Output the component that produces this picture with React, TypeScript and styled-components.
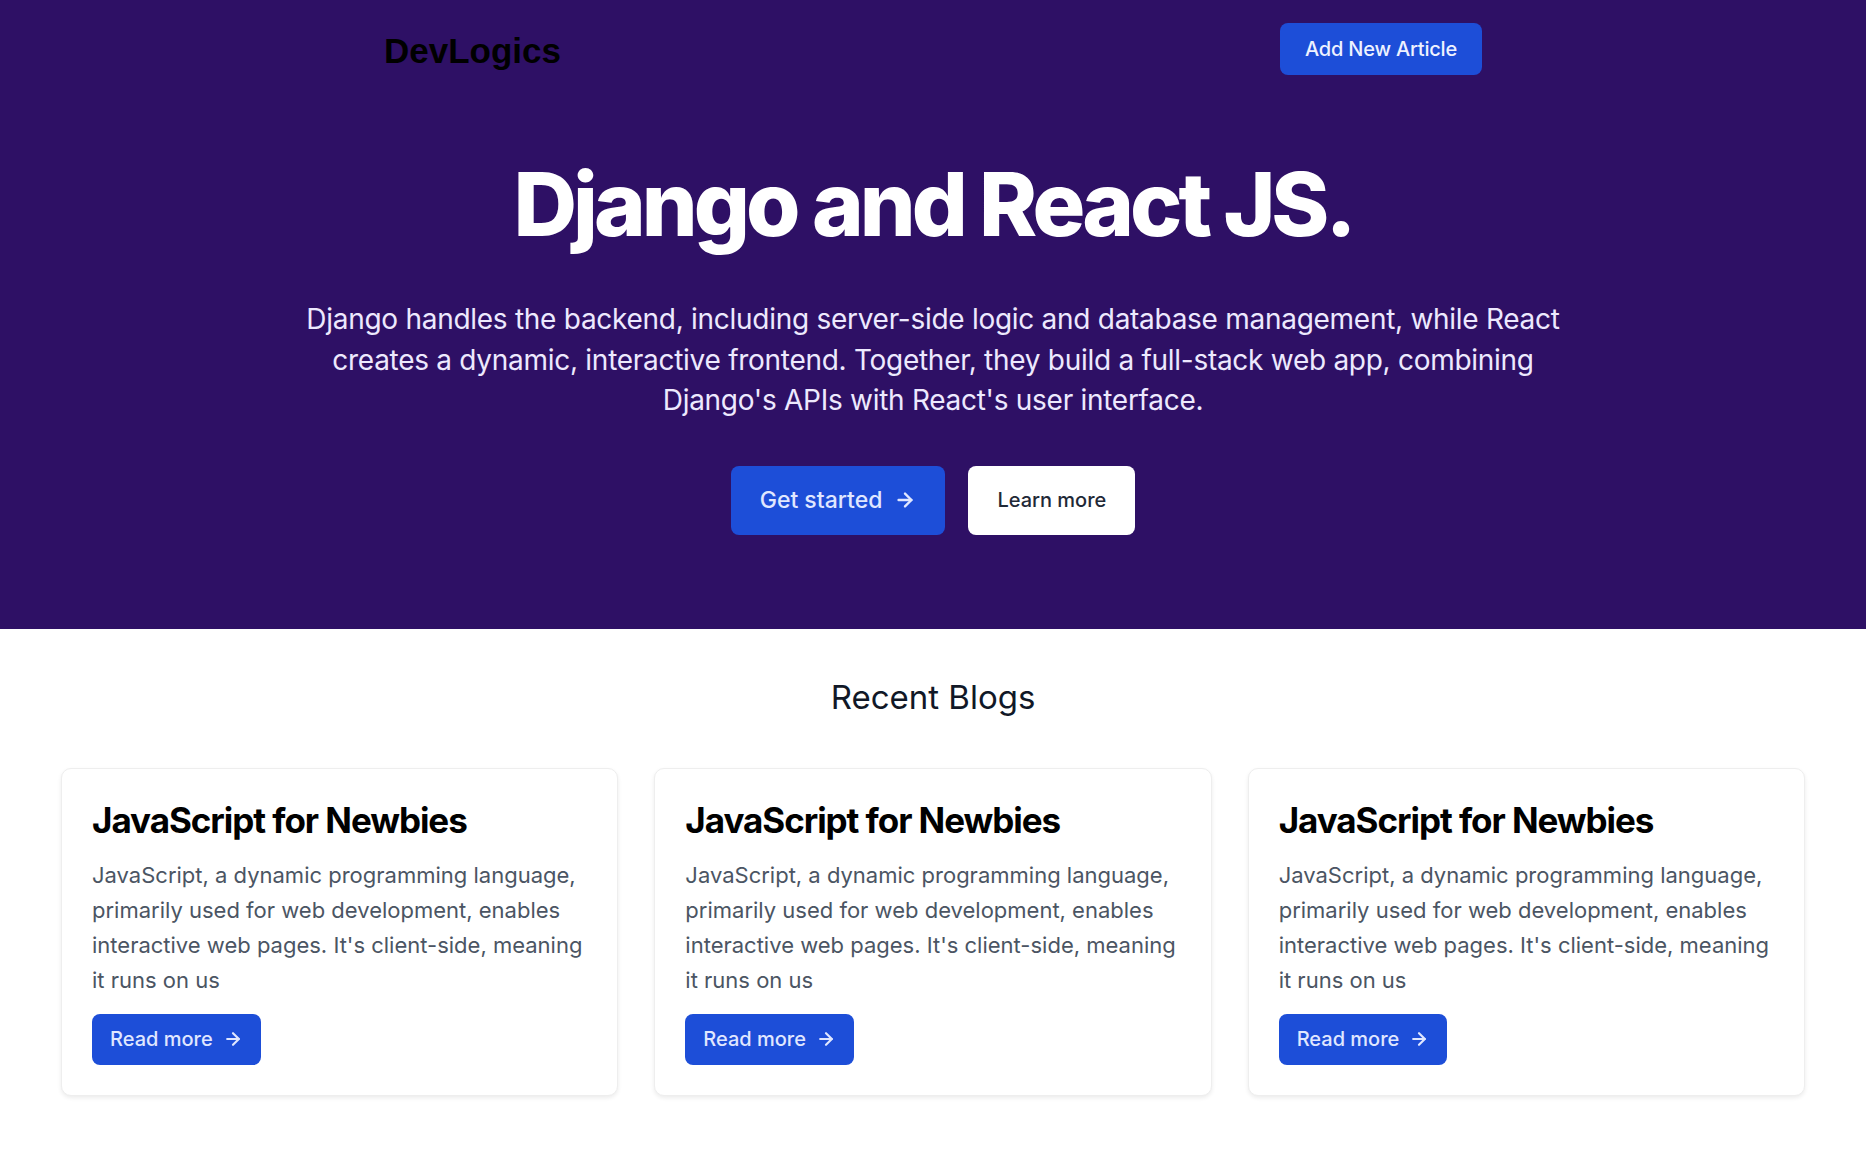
import styled, { createGlobalStyle } from "styled-components";
import { ArrowRight } from "lucide-react";

const GlobalStyle = createGlobalStyle`
  * {
    box-sizing: border-box;
  }

  body {
    margin: 0;
    background: #ffffff;
    font-family: Inter, "Noto Sans", sans-serif;
    color: #111827;
  }
`;

const posts = [
  {
    title: "JavaScript for Newbies",
    body: "JavaScript, a dynamic programming language, primarily used for web development, enables interactive web pages. It's client-side, meaning it runs on us",
  },
  {
    title: "JavaScript for Newbies",
    body: "JavaScript, a dynamic programming language, primarily used for web development, enables interactive web pages. It's client-side, meaning it runs on us",
  },
  {
    title: "JavaScript for Newbies",
    body: "JavaScript, a dynamic programming language, primarily used for web development, enables interactive web pages. It's client-side, meaning it runs on us",
  },
];

const App = () => {
  return (
    <>
      <GlobalStyle />
      <StyledHero>
        <StyledNav>
          <StyledLogo>DevLogics</StyledLogo>
          <StyledNavButton>Add New Article</StyledNavButton>
        </StyledNav>
        <StyledHeading>Django and React JS.</StyledHeading>
        <StyledLead>
          Django handles the backend, including server-side logic and database management, while React creates a
          dynamic, interactive frontend. Together, they build a full-stack web app, combining Django's APIs with
          React's user interface.
        </StyledLead>
        <StyledActions>
          <StyledPrimaryButton>
            Get started <ArrowRight size={22} strokeWidth={2.6} />
          </StyledPrimaryButton>
          <StyledGhostButton>Learn more</StyledGhostButton>
        </StyledActions>
      </StyledHero>

      <StyledBlogSection>
        <StyledSectionTitle>Recent Blogs</StyledSectionTitle>
        <StyledCardGrid>
          {posts.map((post, i) => (
            <StyledCard key={i}>
              <StyledCardTitle>{post.title}</StyledCardTitle>
              <StyledCardText>{post.body}</StyledCardText>
              <StyledReadMore>
                Read more <ArrowRight size={20} strokeWidth={2.6} />
              </StyledReadMore>
            </StyledCard>
          ))}
        </StyledCardGrid>
      </StyledBlogSection>
    </>
  );
};

const StyledHero = styled.header`
  display: flex;
  flex-flow: column;
  align-items: center;
  background: #2e1065;
  padding: 23px 0 94px;
`;

const StyledNav = styled.nav`
  display: flex;
  align-items: center;
  justify-content: space-between;
  width: 1098px;
`;

const StyledLogo = styled.div`
  font-family: "Liberation Sans", Arial, sans-serif;
  font-weight: 700;
  font-size: 35px;
  color: #000000;
  padding-top: 4px;
`;

const StyledNavButton = styled.button`
  height: 52px;
  padding: 0 25px;
  border: none;
  border-radius: 8px;
  background: #1d4ed8;
  color: #eef2ff;
  font-family: Inter, sans-serif;
  font-size: 20px;
  font-weight: 500;
  letter-spacing: -0.01em;
`;

const StyledHeading = styled.h1`
  margin: 85px 0 0;
  font-size: 88px;
  line-height: 1;
  font-weight: 800;
  letter-spacing: -0.045em;
  color: #ffffff;
`;

const StyledLead = styled.p`
  margin: 51px 0 0;
  max-width: 1262px;
  text-align: center;
  font-size: 28px;
  line-height: 40.5px;
  letter-spacing: -0.01em;
  color: #ede9fe;
`;

const StyledActions = styled.div`
  display: flex;
  gap: 23px;
  margin-top: 45px;
`;

const StyledPrimaryButton = styled.button`
  display: flex;
  align-items: center;
  gap: 12px;
  height: 69px;
  padding: 0 29px;
  border: none;
  border-radius: 8px;
  background: #1d4ed8;
  color: #e0e7ff;
  font-family: Inter, sans-serif;
  font-size: 23px;
  font-weight: 500;
`;

const StyledGhostButton = styled.button`
  height: 69px;
  padding: 0 29px;
  border: none;
  border-radius: 8px;
  background: #ffffff;
  color: #1f2937;
  font-family: Inter, sans-serif;
  font-size: 20px;
  font-weight: 500;
`;

const StyledBlogSection = styled.section`
  display: flex;
  flex-flow: column;
  align-items: center;
  padding: 48px 61px 70px;
`;

const StyledSectionTitle = styled.h2`
  margin: 0;
  font-size: 33px;
  line-height: 40px;
  font-weight: 400;
  color: #111827;
`;

const StyledCardGrid = styled.div`
  display: grid;
  grid-template-columns: repeat(3, 1fr);
  gap: 36px;
  width: 100%;
  margin-top: 51px;
`;

const StyledCard = styled.article`
  display: flex;
  flex-flow: column;
  align-items: flex-start;
  padding: 31px 30px 30px;
  border: 1px solid #eeeeee;
  border-radius: 10px;
  background: #ffffff;
  box-shadow: 0 2px 4px rgba(0, 0, 0, 0.08);
`;

const StyledCardTitle = styled.h3`
  margin: 0;
  font-size: 35px;
  line-height: 41px;
  font-weight: 700;
  letter-spacing: -0.03em;
  color: #000000;
`;

const StyledCardText = styled.p`
  margin: 17px 0 0;
  font-size: 22px;
  line-height: 35px;
  color: #4b5563;
`;

const StyledReadMore = styled.button`
  display: flex;
  align-items: center;
  gap: 10px;
  height: 51px;
  margin-top: 16px;
  padding: 0 18px;
  border: none;
  border-radius: 8px;
  background: #1d4ed8;
  color: #e0e7ff;
  font-family: Inter, sans-serif;
  font-size: 20px;
  font-weight: 500;
`;

export default App;
